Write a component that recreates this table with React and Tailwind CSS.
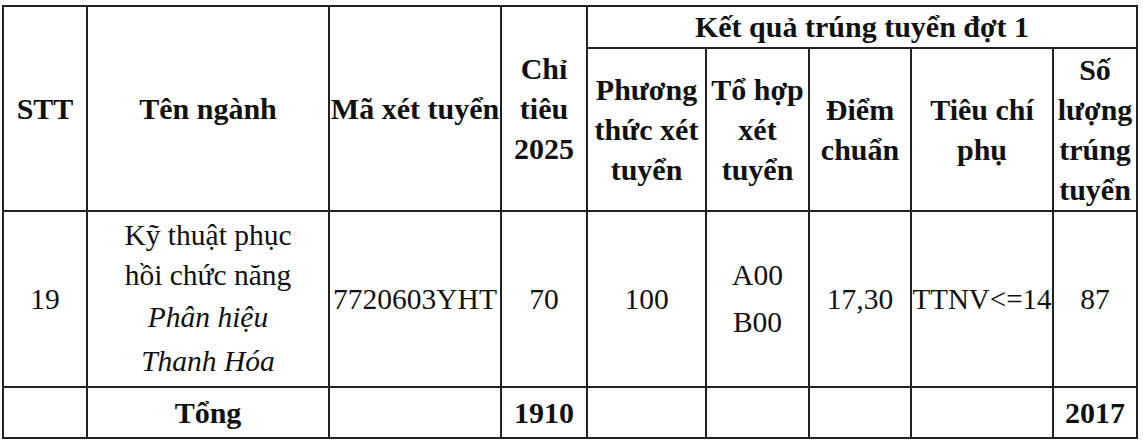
export default function App() {
  const th = "border-2 border-[#222] p-0 text-center align-middle font-['Liberation_Serif'] text-[30px] font-bold leading-[40px] text-[#111]";
  const td = "border-2 border-[#222] p-0 text-center align-middle font-['Liberation_Serif'] text-[29.5px] font-normal leading-[40px] text-[#111]";
  return (
    <div className="w-[1143px] h-[442px] bg-white pt-[5px] pl-[2px] font-['Liberation_Serif'] text-[29px] text-[#111]">
      <table className="table-fixed border-collapse w-[1136px] font-['Liberation_Serif']">
        <colgroup>
          <col className="w-[84px]" />
          <col className="w-[242px]" />
          <col className="w-[172px]" />
          <col className="w-[86px]" />
          <col className="w-[119px]" />
          <col className="w-[103px]" />
          <col className="w-[102px]" />
          <col className="w-[142px]" />
          <col className="w-[84px]" />
        </colgroup>
        <tbody>
          <tr className="h-[42px]">
            <th rowSpan={2} className={th}>STT</th>
            <th rowSpan={2} className={th}>Tên ngành</th>
            <th rowSpan={2} className={th + " whitespace-nowrap"}>Mã xét tuyển</th>
            <th rowSpan={2} className={th}>Chỉ<br />tiêu<br />2025</th>
            <th colSpan={5} className={th}>Kết quả trúng tuyển đợt 1</th>
          </tr>
          <tr className="h-[163px]">
            <th className={th}>Phương<br />thức xét<br />tuyển</th>
            <th className={th}>Tổ hợp<br />xét<br />tuyển</th>
            <th className={th}>Điểm<br />chuẩn</th>
            <th className={th}>Tiêu chí<br />phụ</th>
            <th className={th}>Số<br />lượng<br />trúng<br />tuyển</th>
          </tr>
          <tr className="h-[176px]">
            <td className={td}>19</td>
            <td className={td}>
              <div className="leading-[40px]">Kỹ thuật phục<br />hồi chức năng</div>
              <div className="italic leading-[44px]">Phân hiệu<br />Thanh Hóa</div>
            </td>
            <td className={td + " whitespace-nowrap"}>7720603YHT</td>
            <td className={td}>70</td>
            <td className={td}>100</td>
            <td className={td + " leading-[47px]"}>A00<br />B00</td>
            <td className={td}>17,30</td>
            <td className={td + " whitespace-nowrap text-[29px]"}>TTNV&lt;=14</td>
            <td className={td}>87</td>
          </tr>
          <tr className="h-[51px]">
            <td className={td}></td>
            <td className={th}>Tổng</td>
            <td className={td}></td>
            <td className={th}>1910</td>
            <td className={td}></td>
            <td className={td}></td>
            <td className={td}></td>
            <td className={td}></td>
            <td className={th}>2017</td>
          </tr>
        </tbody>
      </table>
    </div>
  );
}
